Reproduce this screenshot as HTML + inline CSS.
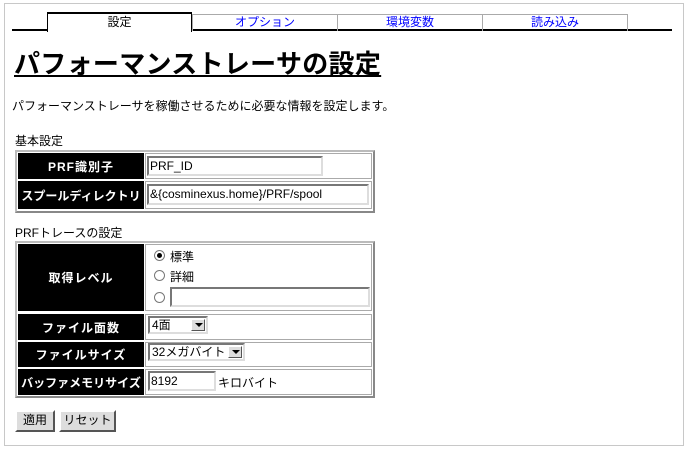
<!DOCTYPE html>
<html><head><meta charset="utf-8"><style>
*{box-sizing:border-box;margin:0;padding:0}
body{width:687px;height:449px;background:#fff;position:relative;overflow:hidden;font-family:"Liberation Sans","Noto Sans CJK JP",sans-serif;font-size:12px;color:#000}
.a{position:absolute}
.frame{left:4px;top:3px;width:680px;height:443px;border:1px solid #c8c8c8}
.tab{top:14px;height:17px;border:1px solid #aaa;border-bottom:none;text-align:center;color:#00f;line-height:15px;font-size:12px}
.lbl{background:#000;color:#fff;font-weight:bold;text-align:center;font-size:12px;display:flex;align-items:center;justify-content:center;letter-spacing:1px}
.cell{border:1px solid #aaa}
.tbl{border:2px solid #bbb;border-right-color:#888;border-bottom-color:#888;background:#fff}
.inp{border:2px solid;border-color:#777 #ddd #ddd #777;background:#fff;font-size:12px;padding-left:1px;line-height:16px}
.btn{background:#ddd;border:2px solid;border-color:#fff #555 #555 #fff;text-align:center;line-height:17px;font-size:12px}
.rad{width:11px;height:11px;border-radius:50%;border:1px solid #777;background:#fff}
.sel{border:2px solid;border-color:#777 #ddd #ddd #777;background:#fff;height:18px;font-size:12px;line-height:14px;padding-left:2px}
.arr{position:absolute;right:1px;top:1px;width:14px;height:12px;background:#ddd;border:1px solid;border-color:#fff #555 #555 #fff}
.arr:after{content:"";position:absolute;left:3px;top:3px;border-left:4px solid transparent;border-right:4px solid transparent;border-top:4px solid #000}
</style></head><body>
<div class="a frame"></div>
<div class="a" style="left:12px;top:29px;width:660px;height:2px;background:#000"></div>
<div class="a" style="left:47px;top:12px;width:145px;height:20px;background:#fff;border:1px solid #000;border-top:2px solid #000;border-bottom:none;text-align:center;line-height:16px">設定</div>
<div class="a tab" style="left:192px;width:146px">オプション</div>
<div class="a tab" style="left:337px;width:146px">環境変数</div>
<div class="a tab" style="left:482px;width:146px">読み込み</div>
<div class="a" style="left:14px;top:49px;font-size:26px;font-weight:bold;line-height:30px;text-decoration:underline;text-underline-offset:2px;letter-spacing:0.3px">パフォーマンストレーサの設定</div>
<div class="a" style="left:12px;top:98px;line-height:16px">パフォーマンストレーサを稼働させるために必要な情報を設定します。</div>
<div class="a" style="left:15px;top:133px;line-height:16px">基本設定</div>
<div class="a tbl" style="left:15px;top:150px;width:360px;height:63px"></div>
<div class="a lbl" style="left:18px;top:153px;width:126px;height:26px">PRF識別子</div>
<div class="a cell" style="left:145px;top:153px;width:227px;height:26px"></div>
<div class="a inp" style="left:147px;top:156px;width:176px;height:20px">PRF_ID</div>
<div class="a lbl" style="left:18px;top:181px;width:126px;height:28px;letter-spacing:0">スプールディレクトリ</div>
<div class="a cell" style="left:145px;top:181px;width:227px;height:28px"></div>
<div class="a inp" style="left:147px;top:184px;width:222px;height:21px">&amp;{cosminexus.home}/PRF/spool</div>
<div class="a" style="left:15px;top:225px;line-height:16px">PRFトレースの設定</div>
<div class="a tbl" style="left:15px;top:241px;width:360px;height:157px"></div>
<div class="a lbl" style="left:18px;top:244px;width:126px;height:67px">取得レベル</div>
<div class="a cell" style="left:145px;top:244px;width:227px;height:67px"></div>
<div class="a rad" style="left:154px;top:250px"></div><div class="a" style="left:157px;top:253px;width:5px;height:5px;border-radius:50%;background:#000"></div>
<div class="a" style="left:170px;top:248px">標準</div>
<div class="a rad" style="left:154px;top:270px"></div><div class="a" style="left:170px;top:268px">詳細</div>
<div class="a rad" style="left:154px;top:292px"></div>
<div class="a inp" style="left:170px;top:287px;width:200px;height:20px"></div>
<div class="a lbl" style="left:18px;top:314px;width:126px;height:26px">ファイル面数</div>
<div class="a cell" style="left:145px;top:314px;width:227px;height:26px"></div>
<div class="a sel" style="left:148px;top:316px;width:60px">4面<span class="arr"></span></div>
<div class="a lbl" style="left:18px;top:342px;width:126px;height:25px">ファイルサイズ</div>
<div class="a cell" style="left:145px;top:342px;width:227px;height:25px"></div>
<div class="a sel" style="left:148px;top:343px;width:97px">32メガバイト<span class="arr"></span></div>
<div class="a lbl" style="left:18px;top:369px;width:126px;height:26px;letter-spacing:0">バッファメモリサイズ</div>
<div class="a cell" style="left:145px;top:369px;width:227px;height:26px"></div>
<div class="a inp" style="left:148px;top:371px;width:68px;height:20px">8192</div>
<div class="a" style="left:218px;top:374px">キロバイト</div>
<div class="a btn" style="left:15px;top:410px;width:40px;height:22px">適用</div>
<div class="a btn" style="left:59px;top:410px;width:57px;height:22px">リセット</div>
</body></html>
